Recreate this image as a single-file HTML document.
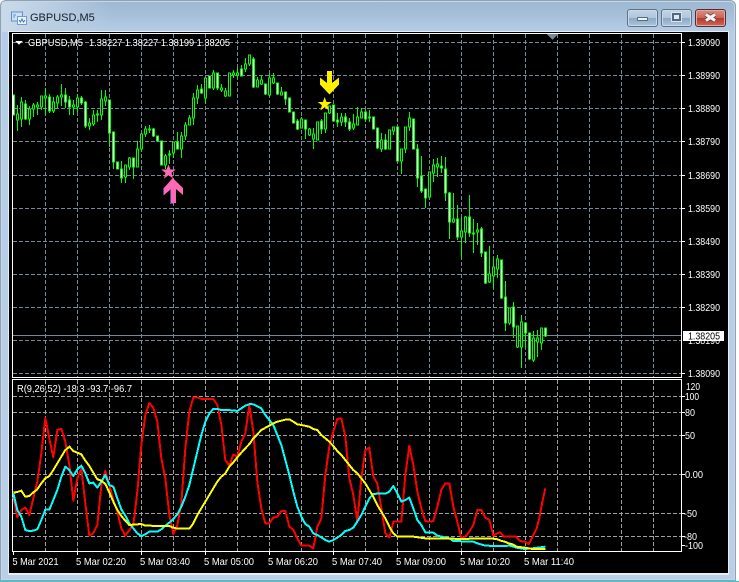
<!DOCTYPE html>
<html><head><meta charset="utf-8"><style>
html,body{margin:0;padding:0;background:#fff}
#w{position:relative;width:739px;height:582px;overflow:hidden;background:#fff;font-family:"Liberation Sans",sans-serif}
#f{position:absolute;left:0;top:0;width:736px;height:581px;border-radius:6px 6px 0 0;background:linear-gradient(180deg,#9db7d1 0,#a6bfd9 14px,#b5cde6 32px,#b9cfe8 100%);box-shadow:inset 0 0 0 1px #8fa3b6,inset 0 0 0 2px #c6d6e6}
#g{position:absolute;left:2px;top:2px;width:110px;height:30px;background:linear-gradient(90deg,#cbdaea,#bbcfe3 40%,rgba(170,195,220,0));}
#c{position:absolute;left:0;bottom:0;width:739px;height:1px;background:#35c9dc}
.b{position:absolute;top:9px;height:16px;width:29px;border:1px solid #5f7388;border-radius:3px;box-shadow:inset 0 0 0 1px #c8d9e9;background:linear-gradient(180deg,#c2d4e6 0,#b0c7dd 48%,#8aa7c4 52%,#aec6df 100%)}
#cl{background:linear-gradient(180deg,#dc8d80 0,#c9665a 48%,#b03a2f 52%,#cc6a58 100%);border-color:#5a2a2e;box-shadow:inset 0 0 0 1px #e0a8a0}
svg{position:absolute;left:0;top:0}
text{font-family:"Liberation Sans",sans-serif;font-size:10.4px;fill:#fff}
</style></head><body><div id="w">
<div id="f"></div><div id="g"></div>
<div style="position:absolute;left:30px;top:11px;font-size:11px;color:#14202c;line-height:14px">GBPUSD,M5</div>
<div class="b" style="left:627px"><div style="position:absolute;left:9px;top:7px;width:9px;height:2px;background:#eef3f8;border:1px solid #56687c;border-radius:1px"></div></div>
<div class="b" style="left:661px"><div style="position:absolute;left:10px;top:3px;width:5px;height:4px;border:2px solid #55677c;background:#dfe8f1;box-shadow:0 0 0 1px #dbe6f0"></div></div>
<div class="b" id="cl" style="left:695px"></div>
<div id="c"></div>
<div style="position:absolute;left:8px;top:31px;width:721px;height:544px;background:#e8edf2"></div>
<div style="position:absolute;left:9px;top:32px;width:719px;height:541px;background:#000"></div>
<svg width="739" height="582" viewBox="0 0 739 582" shape-rendering="crispEdges">
<g shape-rendering="auto">
<path d="M706 14.500L715 20.500M715 14.500L706 20.500" stroke="#6e3a38" stroke-width="4.500" fill="none"/>
<path d="M706 14.500L715 20.500M715 14.500L706 20.500" stroke="#f6f6f6" stroke-width="3" fill="none"/>
<rect x="11.500" y="12" width="11" height="9" fill="#cfe0f2" stroke="#5d8fd0"/><rect x="17.500" y="16.500" width="9" height="8" fill="#eaf2fb" stroke="#6f9bd6"/><path d="M19 20l1.500 2 1.500-3 1.500 3 1.500-2" fill="none" stroke="#4a78b8"/><path d="M13 15h3M13 17h2" stroke="#5d8fd0"/>
</g>
<!-- main grid -->
<path stroke="#778899" stroke-dasharray="4 2" fill="none" d="M13 42.500H681M13 75.500H681M13 108.500H681M13 141.500H681M13 175.500H681M13 208.500H681M13 241.500H681M13 274.500H681M13 307.500H681M13 340.500H681M13 373.500H681M45.500 34V377M77.500 34V377M109.500 34V377M141.500 34V377M173.500 34V377M205.500 34V377M237.500 34V377M269.500 34V377M301.500 34V377M333.500 34V377M365.500 34V377M397.500 34V377M429.500 34V377M461.500 34V377M493.500 34V377M525.500 34V377M557.500 34V377M589.500 34V377M621.500 34V377M653.500 34V377"/>
<!-- sub grid -->
<path stroke="#a0a0a0" stroke-dasharray="4 2" fill="none" d="M13 396.500H681M13 412.500H681M13 435.500H681M13 474.500H681M13 513.500H681M13 536.500H681M45.500 380V551M77.500 380V551M109.500 380V551M141.500 380V551M173.500 380V551M205.500 380V551M237.500 380V551M269.500 380V551M301.500 380V551M333.500 380V551M365.500 380V551M397.500 380V551M429.500 380V551M461.500 380V551M493.500 380V551M525.500 380V551M557.500 380V551M589.500 380V551M621.500 380V551M653.500 380V551"/>
<path d="M13 335.500H682" stroke="#778899"/>
<!-- wicks -->
<path stroke="#00ff00" fill="none" d="M17.500 105V131M21.500 97V127M25.500 100V120M29.500 106V125M33.500 103V117M37.500 102V115M41.500 96V110M45.500 88V115M49.500 94V113M53.500 97V113M57.500 95V108M61.500 84V106M65.500 88V108M69.500 96V115M73.500 100V115M77.500 94V112M81.500 96V105M85.500 101V128M89.500 118V130M93.500 110V126M97.500 110V122M101.500 90V120M105.500 90V106M109.500 100V147M113.500 132V169M117.500 162V169M121.500 161V183M125.500 165V183M129.500 157V170M133.500 158V179M137.500 141V167M141.500 134V152M145.500 126V137M149.500 125V133M153.500 128V137M157.500 136V141M161.500 141V165M165.500 154V169M169.500 150V164M173.500 142V158M177.500 132V149M181.500 132V158M185.500 122V140M189.500 115V125M193.500 93V125M197.500 85V104M201.500 84V94M205.500 78V104M209.500 76V88M213.500 70V90M217.500 73V90M221.500 84V92M225.500 88V97M229.500 73V96M233.500 70V78M237.500 68V78M241.500 65V76M245.500 58V72M249.500 55V66M253.500 57V88M257.500 77V87M261.500 76V85M265.500 84V95M269.500 74V96M273.500 73V84M277.500 83V95M281.500 87V95M285.500 92V105M289.500 98V112M293.500 112V123M297.500 119V130M301.500 117V128M305.500 120V139M309.500 128V136M313.500 128V149M317.500 122V140M321.500 119V134M325.500 113V133M329.500 106V114M333.500 105V121M337.500 113V127M341.500 113V126M345.500 113V127M349.500 118V131M353.500 114V130M357.500 107V125M361.500 108V118M365.500 110V122M369.500 110V122M373.500 117V129M377.500 128V149M381.500 133V152M385.500 134V150M389.500 130V149M393.500 127V135M397.500 127V161M401.500 149V174M405.500 127V153M409.500 112V131M413.500 119V149M417.500 144V187M421.500 156V193M425.500 189V208M429.500 172V197M433.500 159V182M437.500 158V177M441.500 156V173M445.500 157V201M449.500 192V239M453.500 193V223M457.500 205V240M461.500 217V258M465.500 216V243M469.500 195V237M473.500 219V253M477.500 223V245M481.500 227V257M485.500 252V284M489.500 246V283M493.500 257V289M497.500 255V278M501.500 260V299M505.500 281V331M509.500 308V325M513.500 302V338M517.500 326V348M521.500 315V368M525.500 323V348M529.500 333V360M533.500 331V362M537.500 330V357M541.500 328V350M545.500 328V337"/>
<!-- up bodies (black) -->
<path stroke="#00ff00" fill="#000" d="M16.500 114h2V120h-2zM20.500 102h2V119h-2zM28.500 109h2V119h-2zM32.500 105h2V109h-2zM36.500 105h2V107h-2zM40.500 96h2V107h-2zM44.500 96h2V98h-2zM52.500 102h2V111h-2zM56.500 97h2V103h-2zM60.500 95h2V97h-2zM72.500 105h2V107h-2zM76.500 98h2V107h-2zM88.500 123h2V126h-2zM92.500 115h2V124h-2zM96.500 114h2V115h-2zM100.500 99h2V115h-2zM104.500 97h2V101h-2zM124.500 165h2V177h-2zM128.500 158h2V167h-2zM136.500 149h2V167h-2zM140.500 134h2V149h-2zM144.500 129h2V134h-2zM148.500 129h2V130h-2zM164.500 156h2V165h-2zM172.500 142h2V153h-2zM180.500 136h2V149h-2zM184.500 125h2V136h-2zM188.500 118h2V125h-2zM192.500 98h2V118h-2zM196.500 90h2V98h-2zM204.500 78h2V98h-2zM212.500 73h2V88h-2zM220.500 88h2V90h-2zM224.500 91h2V96h-2zM228.500 73h2V96h-2zM232.500 73h2V75h-2zM236.500 73h2V75h-2zM244.500 64h2V69h-2zM248.500 55h2V64h-2zM256.500 80h2V87h-2zM260.500 80h2V84h-2zM268.500 78h2V95h-2zM272.500 78h2V83h-2zM280.500 92h2V95h-2zM300.500 119h2V128h-2zM308.500 129h2V135h-2zM312.500 134h2V139h-2zM316.500 122h2V140h-2zM324.500 113h2V129h-2zM328.500 106h2V113h-2zM340.500 117h2V122h-2zM352.500 124h2V128h-2zM356.500 117h2V125h-2zM360.500 112h2V118h-2zM380.500 140h2V149h-2zM388.500 130h2V149h-2zM392.500 127h2V131h-2zM400.500 149h2V161h-2zM404.500 127h2V149h-2zM408.500 118h2V127h-2zM428.500 172h2V197h-2zM432.500 165h2V173h-2zM436.500 164h2V167h-2zM452.500 219h2V222h-2zM460.500 231h2V237h-2zM464.500 217h2V232h-2zM476.500 230h2V232h-2zM488.500 274h2V282h-2zM492.500 267h2V276h-2zM496.500 259h2V269h-2zM508.500 308h2V323h-2zM516.500 326h2V347h-2zM520.500 322h2V347h-2zM532.500 338h2V360h-2zM536.500 338h2V342h-2zM540.500 328h2V343h-2z"/>
<!-- down bodies (white) -->
<path stroke="#00ff00" fill="#fff" d="M12.500 95h2V115h-2zM24.500 104h2V119h-2zM48.500 97h2V111h-2zM64.500 95h2V102h-2zM68.500 100h2V107h-2zM80.500 98h2V103h-2zM84.500 102h2V126h-2zM108.500 100h2V133h-2zM112.500 132h2V162h-2zM116.500 162h2V169h-2zM120.500 169h2V178h-2zM132.500 158h2V167h-2zM152.500 129h2V136h-2zM156.500 136h2V141h-2zM160.500 141h2V165h-2zM168.500 154h2V155h-2zM176.500 142h2V149h-2zM200.500 89h2V93h-2zM208.500 76h2V88h-2zM216.500 73h2V88h-2zM240.500 69h2V76h-2zM252.500 59h2V87h-2zM264.500 84h2V94h-2zM276.500 83h2V94h-2zM284.500 92h2V99h-2zM288.500 98h2V112h-2zM292.500 112h2V123h-2zM296.500 121h2V129h-2zM304.500 120h2V129h-2zM320.500 121h2V129h-2zM332.500 105h2V121h-2zM336.500 120h2V122h-2zM344.500 117h2V122h-2zM348.500 122h2V129h-2zM364.500 112h2V119h-2zM368.500 117h2V118h-2zM372.500 117h2V129h-2zM376.500 128h2V148h-2zM384.500 140h2V149h-2zM396.500 127h2V161h-2zM412.500 119h2V149h-2zM416.500 149h2V178h-2zM420.500 176h2V191h-2zM424.500 189h2V198h-2zM440.500 166h2V168h-2zM444.500 169h2V193h-2zM448.500 193h2V222h-2zM456.500 219h2V237h-2zM468.500 217h2V233h-2zM472.500 233h2V234h-2zM480.500 229h2V253h-2zM484.500 252h2V283h-2zM500.500 260h2V298h-2zM504.500 297h2V323h-2zM512.500 307h2V327h-2zM524.500 323h2V333h-2zM528.500 333h2V359h-2zM544.500 328h2V336h-2z"/>
<!-- frames -->
<path stroke="#fff" fill="none" d="M12.500 33.500H681.500V377.500H12.500zM12.500 379.500H681.500V551.500H12.500z"/>
<path fill="#778899" d="M547 34h11l-5.500 6z"/>
<path fill="#fff" d="M15 41h8l-4 3.500z"/>
<path stroke="#fff" d="M682 42.500h3M682 75.500h3M682 108.500h3M682 141.500h3M682 175.500h3M682 208.500h3M682 241.500h3M682 274.500h3M682 307.500h3M682 373.500h3M682 396.500h3M682 412.500h3M682 435.500h3M682 474.500h3M682 513.500h3M682 536.500h3M682 545.500h3M13.500 552v3M77.500 552v3M141.500 552v3M205.500 552v3M269.500 552v3M333.500 552v3M397.500 552v3M461.500 552v3M525.500 552v3"/>
<!-- indicators -->
<g transform="translate(0 375) scale(.33333)" fill="none" stroke-width="6" stroke-linejoin="round">
<polyline stroke="#ff0000" points="40,365 52,427 64,405 76,398 88,420 100,370 112,320 124,235 136,128 148,190 160,247 172,165 184,162 196,200 208,270 220,377 232,310 244,280 256,385 268,482 280,475 292,450 304,330 316,288 328,330 340,375 352,410 364,460 376,482 388,465 400,450 412,350 424,210 436,120 448,84 460,98 472,140 484,250 496,310 508,420 520,478 532,450 544,385 556,220 568,110 580,67 592,67 604,72 640,72 652,90 664,150 676,255 688,272 700,238 712,245 724,200 736,175 748,90 760,170 772,320 784,400 796,445 808,445 820,428 832,425 844,408 856,408 868,455 880,465 892,490 904,512 916,512 928,512 940,520 952,455 964,430 976,300 988,215 1000,170 1012,132 1024,130 1036,185 1048,310 1060,360 1072,440 1084,310 1096,225 1108,218 1120,305 1132,325 1144,400 1156,475 1168,488 1180,440 1192,440 1204,440 1216,300 1228,212 1240,270 1252,350 1264,400 1276,438 1288,440 1300,438 1312,395 1324,345 1336,325 1348,325 1360,395 1372,440 1384,490 1396,485 1408,470 1420,450 1432,405 1444,405 1456,428 1468,435 1480,482 1492,475 1500,472 1512,485 1548,485 1560,498 1574,500 1586,507 1598,485 1610,460 1618,430 1626,385 1636,340"/>
<polyline stroke="#00ffff" points="40,355 52,405 64,425 76,465 88,468 100,467 112,463 124,435 136,404 148,404 160,375 172,345 184,305 196,275 208,285 220,303 232,283 244,272 256,295 268,325 280,323 292,338 304,320 316,300 328,330 340,335 352,370 364,403 376,422 388,445 400,460 412,475 424,483 436,478 448,470 472,470 484,463 496,452 508,443 520,432 532,418 544,395 556,365 568,330 580,280 592,230 604,180 616,140 628,115 640,102 652,102 664,105 700,106 712,108 724,100 736,92 750,87 760,88 784,100 796,120 808,135 820,150 832,180 844,210 856,255 868,300 880,350 892,395 904,425 916,447 928,455 940,475 952,480 964,487 976,495 988,500 1000,495 1012,488 1024,480 1036,468 1048,465 1060,458 1072,440 1084,420 1096,395 1108,370 1120,357 1132,356 1156,356 1168,350 1180,333 1192,355 1204,380 1216,375 1228,368 1240,400 1252,435 1264,450 1276,472 1300,473 1312,482 1348,490 1360,498 1420,500 1432,505 1456,512 1500,513 1530,512 1550,518 1574,522 1598,520 1636,515"/>
<polyline stroke="#ffff00" points="40,353 52,351 64,347 76,365 88,363 100,352 112,343 124,325 136,310 148,303 160,285 172,265 184,245 196,225 208,215 220,228 232,233 244,238 256,257 268,273 280,293 292,313 304,317 316,327 328,352 340,380 352,405 364,423 376,437 388,450 412,448 424,447 436,452 508,453 520,458 532,461 568,461 580,445 592,420 604,400 616,380 628,360 640,340 652,320 664,305 676,295 688,275 700,262 712,247 724,233 736,220 750,205 760,190 772,178 784,165 808,152 820,145 832,140 856,134 868,133 880,140 892,148 904,150 928,155 940,162 952,165 964,180 976,190 988,200 1000,213 1012,228 1024,240 1036,255 1048,270 1060,285 1072,295 1084,310 1096,325 1108,345 1120,365 1132,390 1144,410 1156,430 1168,455 1180,475 1192,485 1240,485 1276,490 1348,490 1372,492 1470,490 1490,492 1502,497 1514,500 1526,505 1538,508 1550,515 1574,518 1598,522 1636,522"/>
</g>
<!-- markers -->
<g shape-rendering="auto">
<polygon fill="#ff69b4" points="168.500,164.500 170.500,169.500 175.800,169.500 171.500,172.900 173,178.500 168.500,175.200 164,178.500 165.500,172.900 161.200,169.500 166.500,169.500"/>
<polygon fill="#5a3fa8" points="172.500,179 163,188.500 163,195.500 170,190 170,204 173,204 173,190"/>
<polygon fill="#ff69b4" points="172.700,178 183,188 183,195 176,189 176,203 171,203 171,189 164,195 164,188"/>
<polygon fill="#fff000" points="327,71 332,71 332,83 339,77.500 339,84.500 329.500,94.500 320,84.500 320,77.500 327,83"/>
<polygon fill="#fff000" points="324.700,97 326.500,102 331.700,102 327.500,105.200 329,110.500 324.700,107.300 320.400,110.500 321.900,105.200 317.700,102 322.900,102"/>
</g>
<!-- labels -->
<text x="688" y="46" textLength="32" lengthAdjust="spacingAndGlyphs">1.39090</text>
<text x="688" y="79" textLength="32" lengthAdjust="spacingAndGlyphs">1.38990</text>
<text x="688" y="112" textLength="32" lengthAdjust="spacingAndGlyphs">1.38890</text>
<text x="688" y="145" textLength="32" lengthAdjust="spacingAndGlyphs">1.38790</text>
<text x="688" y="179" textLength="32" lengthAdjust="spacingAndGlyphs">1.38690</text>
<text x="688" y="212" textLength="32" lengthAdjust="spacingAndGlyphs">1.38590</text>
<text x="688" y="245" textLength="32" lengthAdjust="spacingAndGlyphs">1.38490</text>
<text x="688" y="278" textLength="32" lengthAdjust="spacingAndGlyphs">1.38390</text>
<text x="688" y="311" textLength="32" lengthAdjust="spacingAndGlyphs">1.38290</text>
<text x="688" y="344" textLength="32" lengthAdjust="spacingAndGlyphs">1.38190</text>
<rect x="683" y="331" width="41" height="10" fill="#fff"/>
<text x="688" y="339.500" textLength="32" lengthAdjust="spacingAndGlyphs" style="fill:#000">1.38205</text>
<text x="688" y="377" textLength="32" lengthAdjust="spacingAndGlyphs">1.38090</text>
<text x="686" y="390" textLength="14" lengthAdjust="spacingAndGlyphs">120</text>
<text x="685" y="400" textLength="14" lengthAdjust="spacingAndGlyphs">100</text>
<text x="685" y="416" textLength="10" lengthAdjust="spacingAndGlyphs">80</text>
<text x="685" y="439" textLength="10" lengthAdjust="spacingAndGlyphs">50</text>
<text x="685" y="478" textLength="18" lengthAdjust="spacingAndGlyphs">0.00</text>
<text x="684" y="517" textLength="13" lengthAdjust="spacingAndGlyphs">-50</text>
<text x="684" y="540" textLength="13" lengthAdjust="spacingAndGlyphs">-80</text>
<text x="685" y="549" textLength="18" lengthAdjust="spacingAndGlyphs">-100</text>
<text x="28" y="46" textLength="55" lengthAdjust="spacingAndGlyphs">GBPUSD,M5</text>
<text x="89" y="46" textLength="141" lengthAdjust="spacingAndGlyphs">1.38227 1.38227 1.38199 1.38205</text>
<text x="17" y="392" textLength="115" lengthAdjust="spacingAndGlyphs">R(9,26,52) -18.3 -93.7 -96.7</text>
<text x="12.500" y="565" textLength="46" lengthAdjust="spacingAndGlyphs">5 Mar 2021</text>
<text x="76" y="565" textLength="50" lengthAdjust="spacingAndGlyphs">5 Mar 02:20</text>
<text x="140" y="565" textLength="50" lengthAdjust="spacingAndGlyphs">5 Mar 03:40</text>
<text x="204" y="565" textLength="50" lengthAdjust="spacingAndGlyphs">5 Mar 05:00</text>
<text x="268" y="565" textLength="50" lengthAdjust="spacingAndGlyphs">5 Mar 06:20</text>
<text x="332" y="565" textLength="50" lengthAdjust="spacingAndGlyphs">5 Mar 07:40</text>
<text x="396" y="565" textLength="50" lengthAdjust="spacingAndGlyphs">5 Mar 09:00</text>
<text x="460" y="565" textLength="50" lengthAdjust="spacingAndGlyphs">5 Mar 10:20</text>
<text x="524" y="565" textLength="50" lengthAdjust="spacingAndGlyphs">5 Mar 11:40</text>
</svg>
</div></body></html>
